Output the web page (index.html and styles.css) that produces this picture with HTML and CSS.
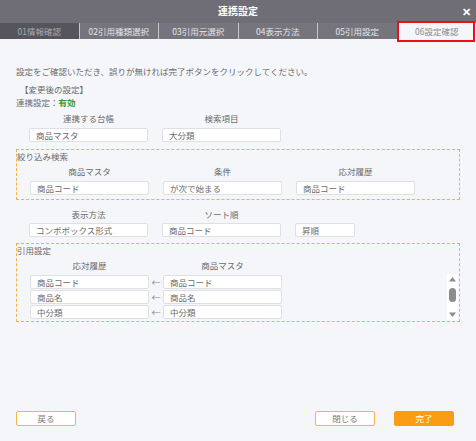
FILE: index.html
```html
<!doctype html>
<html>
<head>
<meta charset="utf-8">
<title>連携設定</title>
<link rel="stylesheet" href="styles.css">
</head>
<body>

<div class="titlebar">連携設定<span class="close">✕</span></div>

<div class="tabs">
  <div class="tab done">01情報確認</div>
  <div class="tab">02引用種類選択</div>
  <div class="tab">03引用元選択</div>
  <div class="tab">04表示方法</div>
  <div class="tab">05引用設定</div>
  <div class="tab active">06設定確認</div>
</div>

<div class="content">
  <p class="intro">設定をご確認いただき、誤りが無ければ完了ボタンをクリックしてください。</p>
  <p class="sub">【変更後の設定】</p>
  <p class="line">連携設定：<b class="ok">有効</b></p>

  <div class="grid head1">
    <span>連携する台帳</span><span>検索項目</span>
  </div>
  <div class="grid">
    <div class="field">商品マスタ</div><div class="field">大分類</div>
  </div>

  <div class="box box1">
    <div class="boxlabel">絞り込み検索</div>
    <div class="grid head">
      <span>商品マスタ</span><span>条件</span><span>応対履歴</span>
    </div>
    <div class="grid">
      <div class="field">商品コード</div><div class="field">が次で始まる</div><div class="field">商品コード</div>
    </div>
  </div>

  <div class="grid head2">
    <span>表示方法</span><span>ソート順</span>
  </div>
  <div class="grid">
    <div class="field">コンボボックス形式</div><div class="field">商品コード</div><div class="field short">昇順</div>
  </div>

  <div class="box box2">
    <div class="boxlabel">引用設定</div>
    <div class="grid head">
      <span>応対履歴</span><span>商品マスタ</span>
    </div>
    <div class="maprows">
      <div class="maprow"><div class="field">商品コード</div><span class="arrow">←</span><div class="field">商品コード</div></div>
      <div class="maprow"><div class="field">商品名</div><span class="arrow">←</span><div class="field">商品名</div></div>
      <div class="maprow"><div class="field">中分類</div><span class="arrow">←</span><div class="field">中分類</div></div>
      <div class="scroll">
        <svg width="11" height="46" viewBox="0 0 11 46">
          <path d="M5.5 3 L9 7.5 L2 7.5 Z" fill="#8c8c8c"/>
          <rect x="2" y="14" width="7" height="14" rx="3.5" fill="#8c8c8c"/>
          <path d="M2 38.5 L9 38.5 L5.5 43 Z" fill="#8c8c8c"/>
        </svg>
      </div>
    </div>
  </div>

  <div class="buttons">
    <button class="btn">戻る</button>
    <span class="spacer"></span>
    <button class="btn">閉じる</button>
    <button class="btn primary">完了</button>
  </div>
</div>

</body>
</html>
```

FILE: styles.css
```css
body {
	margin: 0;
	background: #f5f6fa;
	font-family: "Noto Sans CJK JP", "Noto Sans", sans-serif;
	font-size: 8.5px;
	color: #6a6a6a;
}

.titlebar {
	position: relative;
	height: 23px;
	line-height: 22px;
	background: #6f6e76;
	color: #fff;
	font-weight: bold;
	font-size: 10px;
	text-align: center;
}
.close {
	position: absolute;
	right: 5px;
	top: 0;
	font-size: 11px;
}

.tabs {
	display: flex;
	height: 16px;
	background: #76757d;
}
.tab {
	position: relative;
	flex: 1;
	line-height: 16px;
	text-align: center;
	color: #e6e6e8;
	border-left: 1px solid #c8c8cc;
}
.tab:first-child { border-left: none; }
.tab.done {
	background: #56555d;
	color: #a9a8ae;
}
.tab.active {
	background: #f5f6fa;
	color: #8a8a8a;
}
.tab.active::after {
	content: "";
	position: absolute;
	left: -1px;
	right: 1px;
	top: -2px;
	bottom: -3px;
	border: 2px solid #e8121a;
}

.content {
	padding: 0 16px;
}
p {
	margin: 0;
	line-height: 13px;
}
.intro { margin-top: 26px; }
.sub { margin-top: 5px; padding-left: 4px; }
.ok { color: #2e9a32; }

.grid {
	display: grid;
	grid-template-columns: 119px 119px 119px;
	column-gap: 14px;
	padding-left: 13px;
}
.grid span {
	text-align: center;
	line-height: 13px;
}
.head1 { margin-top: 3px; margin-bottom: 3px; }
.head2 { margin-top: 8px; margin-bottom: 2px; }
.head { margin-top: 2px; margin-bottom: 3px; }

.field {
	height: 14px;
	line-height: 13px;
	box-sizing: border-box;
	background: #fff;
	border: 1px solid #dfe0e4;
	border-radius: 2px;
	padding-left: 6px;
	color: #6a6a6a;
}
.field.short { width: 60px; }

.box {
	border: 1px dashed #f6b23c;
	margin-top: 7px;
	padding-bottom: 3px;
}
.boxlabel {
	line-height: 13px;
}
.box1 { padding-bottom: 4px; }
.box2 { margin-top: 6px; padding-bottom: 1px; }

.maprows {
	position: relative;
	padding-left: 13px;
}
.maprow {
	display: flex;
	align-items: center;
	margin-bottom: 1px;
}
.maprow .field { width: 119px; }
.arrow {
	width: 14px;
	text-align: center;
	color: #888;
	font-size: 9px;
}
.scroll {
	position: absolute;
	right: 1px;
	top: -1px;
	width: 11px;
	height: 46px;
	background: #fff;
}
.scroll svg { display: block; }

.buttons {
	display: flex;
	margin-top: 89px;
}
.spacer { flex: 1; }
.btn {
	width: 60px;
	height: 15px;
	padding: 0;
	font-family: inherit;
	font-size: 8.5px;
	line-height: 13px;
	color: #777;
	background: #fff;
	border: 1px solid #f8b447;
	border-radius: 2px;
}
.btn.primary {
	margin-left: 19px;
	margin-right: 6px;
	background: #fb9d12;
	border-color: #fb9d12;
	color: #fff;
}
```
